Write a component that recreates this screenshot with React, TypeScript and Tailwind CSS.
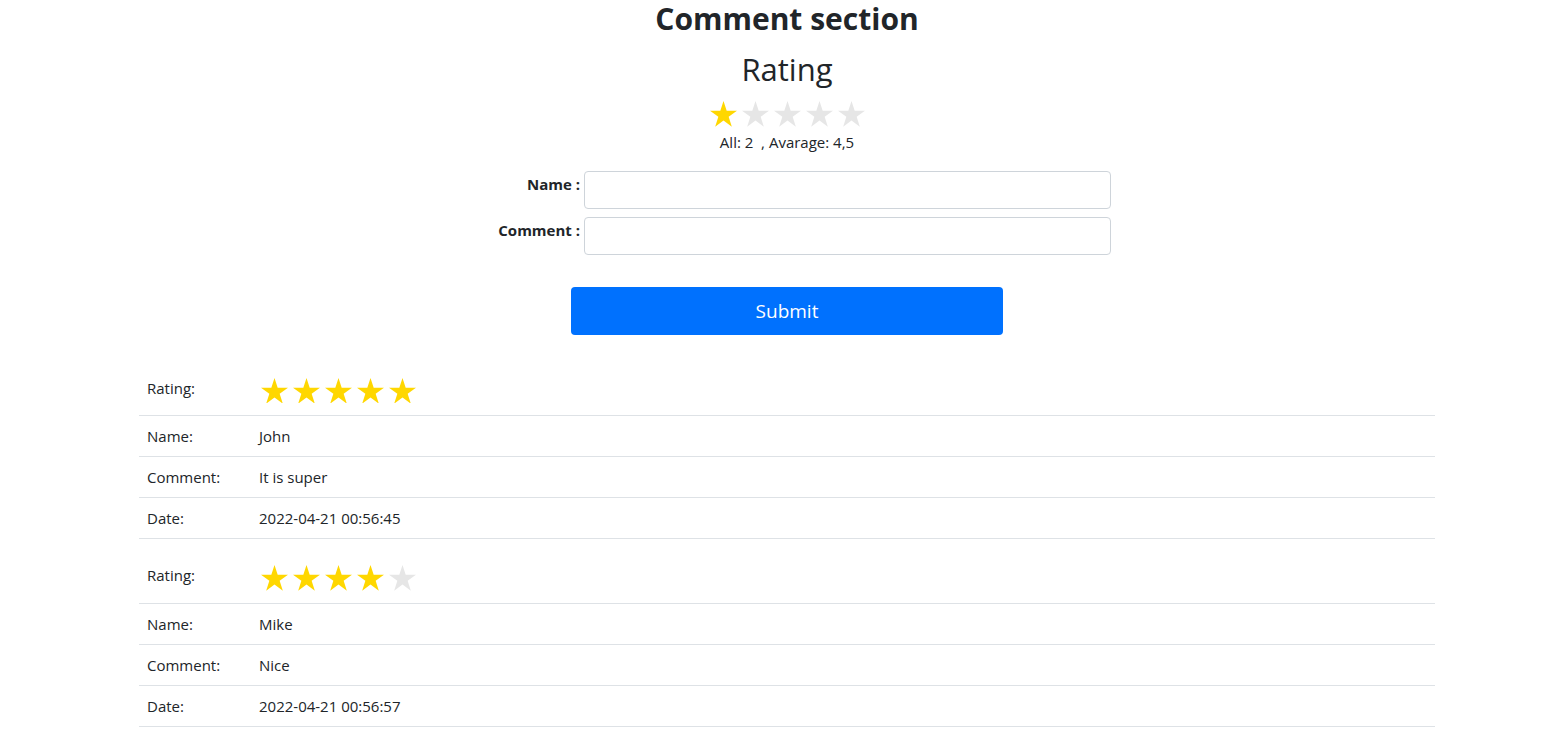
const comments = [
  { rating: 5, name: 'John', comment: 'It is super', date: '2022-04-21 00:56:45' },
  { rating: 4, name: 'Mike', comment: 'Nice', date: '2022-04-21 00:56:57' },
]

function Star({ filled, size = 27 }: { filled: boolean; size?: number }) {
  return (
    <svg width={size} height={size * 0.95} viewBox="0 0 24 22.8" className="block">
      <path
        d="M12 0l2.83 8.71h9.16l-7.41 5.38 2.83 8.71L12 17.42 4.59 22.8l2.83-8.71L0 8.71h9.17z"
        fill={filled ? '#ffd700' : '#e6e6e6'}
      />
    </svg>
  )
}

function Stars({ value }: { value: number }) {
  return (
    <div className="flex gap-[5px]">
      {[1, 2, 3, 4, 5].map(i => (
        <Star key={i} filled={i <= value} />
      ))}
    </div>
  )
}

export default function App() {
  return (
    <div
      className="min-h-screen bg-white text-[#212529]"
      style={{ fontFamily: '"Segoe UI", "Open Sans", "Noto Sans", sans-serif' }}
    >
      <div className="ml-[139px] w-[1296px]">
        <h2 className="text-center text-[30px] font-bold leading-[38px]">Comment section</h2>
        <h3 className="mt-[12px] text-center text-[31px] font-normal leading-[38px]">Rating</h3>

        <div className="mt-[13px] flex justify-center">
          <div className="flex gap-[5px] pl-[1px]">
            {[1, 2, 3, 4, 5].map(i => (
              <Star key={i} filled={i <= 1} />
            ))}
          </div>
        </div>
        <p className="mt-[5px] text-center text-[15px] leading-[21px] whitespace-pre">All: 2  , Avarage: 4,5</p>

        <form className="mt-[18px] flex flex-col items-center" onSubmit={e => e.preventDefault()}>
          <div className="flex w-[648px] items-start gap-[4px]">
            <label className="w-[117px] pt-[2px] text-right text-[15px] leading-[22px] font-bold">Name :</label>
            <input
              type="text"
              className="h-[38px] w-[527px] rounded-[4px] border border-[#ced4da] px-3 outline-none"
            />
          </div>
          <div className="mt-[8px] flex w-[648px] items-start gap-[4px]">
            <label className="w-[117px] pt-[2px] text-right text-[15px] leading-[22px] font-bold">Comment :</label>
            <input
              type="text"
              className="h-[38px] w-[527px] rounded-[4px] border border-[#ced4da] px-3 outline-none"
            />
          </div>
          <button
            type="submit"
            className="mt-[32px] h-[48px] w-[432px] rounded-[4px] bg-[#0071fe] pt-[1px] text-[19px] text-white"
          >
            Submit
          </button>
        </form>

        <div className="mt-[31px]">
          {comments.map((c, idx) => (
            <table key={idx} className="mb-[14px] w-full border-collapse text-[15px]">
              <tbody>
                <tr className="border-b border-[#dee2e6]">
                  <td className="w-[112px] px-2 pt-[12px] align-top leading-[21px]">Rating:</td>
                  <td className="px-2 py-[12px] pl-[10px]">
                    <Stars value={c.rating} />
                  </td>
                </tr>
                <tr className="h-[41px] border-b border-[#dee2e6]">
                  <td className="px-2">Name:</td>
                  <td className="px-2">{c.name}</td>
                </tr>
                <tr className="h-[41px] border-b border-[#dee2e6]">
                  <td className="px-2">Comment:</td>
                  <td className="px-2">{c.comment}</td>
                </tr>
                <tr className="h-[41px] border-b border-[#dee2e6]">
                  <td className="px-2">Date:</td>
                  <td className="px-2">{c.date}</td>
                </tr>
              </tbody>
            </table>
          ))}
        </div>
      </div>
    </div>
  )
}
